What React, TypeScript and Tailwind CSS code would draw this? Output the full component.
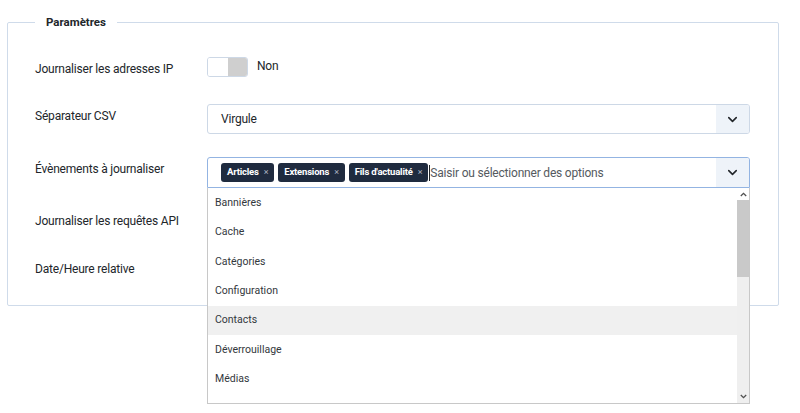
import { ChevronDown } from "lucide-react";

const font = { fontFamily: "Roboto, 'Noto Sans', sans-serif" };

const tags = ["Articles", "Extensions", "Fils d'actualité"];

const options = [
  "Bannières",
  "Cache",
  "Catégories",
  "Configuration",
  "Contacts",
  "Déverrouillage",
  "Médias",
];

function Toggle({ label }: { label?: string }) {
  return (
    <div className="flex items-center gap-[9px]">
      <div className="flex h-[20px] w-[41px] overflow-hidden rounded-[3px] border border-[#cdd8e6]">
        <div className="flex-1 bg-white" />
        <div className="flex-1 bg-[#cfcfcf]" />
      </div>
      {label && (
        <span className="pb-[2px] text-[12px] tracking-[-0.2px] text-[#22262a]">{label}</span>
      )}
    </div>
  );
}

function Label({ children }: { children: React.ReactNode }) {
  return (
    <div className="w-[172px] shrink-0 pt-[4px] text-[12px] leading-4 tracking-[-0.2px] text-[#22262a]">
      {children}
    </div>
  );
}

function Scrollbar() {
  return (
    <div className="flex w-[12px] shrink-0 flex-col bg-[#efefef]">
      <div className="flex h-[12px] items-center justify-center bg-white">
        <svg width="7" height="5" viewBox="0 0 7 5">
          <path d="M0.8 4 L3.5 1.3 L6.2 4" fill="none" stroke="#505050" strokeWidth="1.3" />
        </svg>
      </div>
      <div className="h-[77px] bg-[#c9c9c9]" />
      <div className="flex-1" />
      <div className="flex h-[14px] items-center justify-center">
        <svg width="7" height="5" viewBox="0 0 7 5">
          <path d="M0.8 1 L3.5 3.7 L6.2 1" fill="none" stroke="#505050" strokeWidth="1.3" />
        </svg>
      </div>
    </div>
  );
}

export default function App() {
  return (
    <div className="h-[413px] w-[800px] bg-white pt-[14px]" style={font}>
      <fieldset className="ml-[7px] w-[772px] rounded-[2px] border border-[#cfdbea] pl-[27px] pt-[27px] pb-[2px]">
        <legend className="px-[11px] text-[11.5px] font-bold leading-4 text-[#22262a]">
          Paramètres
        </legend>

        <div className="flex h-[47px] items-start">
          <Label>Journaliser les adresses IP</Label>
          <Toggle label="Non" />
        </div>

        <div className="flex h-[53px] items-start">
          <Label>Séparateur CSV</Label>
          <div className="flex h-[30px] w-[543px] items-center overflow-hidden rounded-[3px] border border-[#cdd8e6] bg-white">
            <span className="flex-1 pl-[13px] text-[12px] tracking-[-0.2px] text-[#22262a]">Virgule</span>
            <div className="flex h-full w-[33px] items-center justify-center bg-[#eef3f9]">
              <ChevronDown size={15} strokeWidth={2.5} className="text-[#22262a]" />
            </div>
          </div>
        </div>

        <div className="flex h-[52px] items-start">
          <Label>Évènements à journaliser</Label>
          <div className="relative z-10 w-[543px]">
            <div className="flex h-[31px] items-center overflow-hidden rounded-t-[3px] border border-[#93b4e2] bg-white">
              <div className="flex flex-1 items-center gap-[4px] pl-[13px]">
                {tags.map((t) => (
                  <span
                    key={t}
                    className="flex h-[19px] items-center gap-[5px] rounded-[3px] bg-[#1f2b3f] px-[6px] text-[9.5px] font-bold tracking-[-0.2px] text-white"
                  >
                    {t}
                    <span className="text-[9px] font-normal text-[#aab3c0]">×</span>
                  </span>
                ))}
                <span className="ml-[-3px] h-[16px] w-px bg-[#22262a]" />
                <span className="ml-[-4px] text-[12px] tracking-[-0.2px] text-[#555a60]">
                  Saisir ou sélectionner des options
                </span>
              </div>
              <div className="flex h-full w-[33px] items-center justify-center bg-[#eef3f9]">
                <ChevronDown size={15} strokeWidth={2.5} className="text-[#22262a]" />
              </div>
            </div>
            <div className="flex h-[216px] border border-t-0 border-[#c8c8c8] bg-white">
              <ul className="flex-1">
                {options.map((o) => (
                  <li
                    key={o}
                    className={`flex h-[29.4px] items-center pl-[7px] text-[10.5px] text-[#33383d] ${
                      o === "Contacts" ? "bg-[#f0f0f0]" : ""
                    }`}
                  >
                    {o}
                  </li>
                ))}
              </ul>
              <Scrollbar />
            </div>
          </div>
        </div>

        <div className="flex h-[48px] items-start">
          <Label>Journaliser les requêtes API</Label>
          <Toggle />
        </div>

        <div className="flex h-[46px] items-start">
          <Label>Date/Heure relative</Label>
          <Toggle />
        </div>
      </fieldset>
    </div>
  );
}
